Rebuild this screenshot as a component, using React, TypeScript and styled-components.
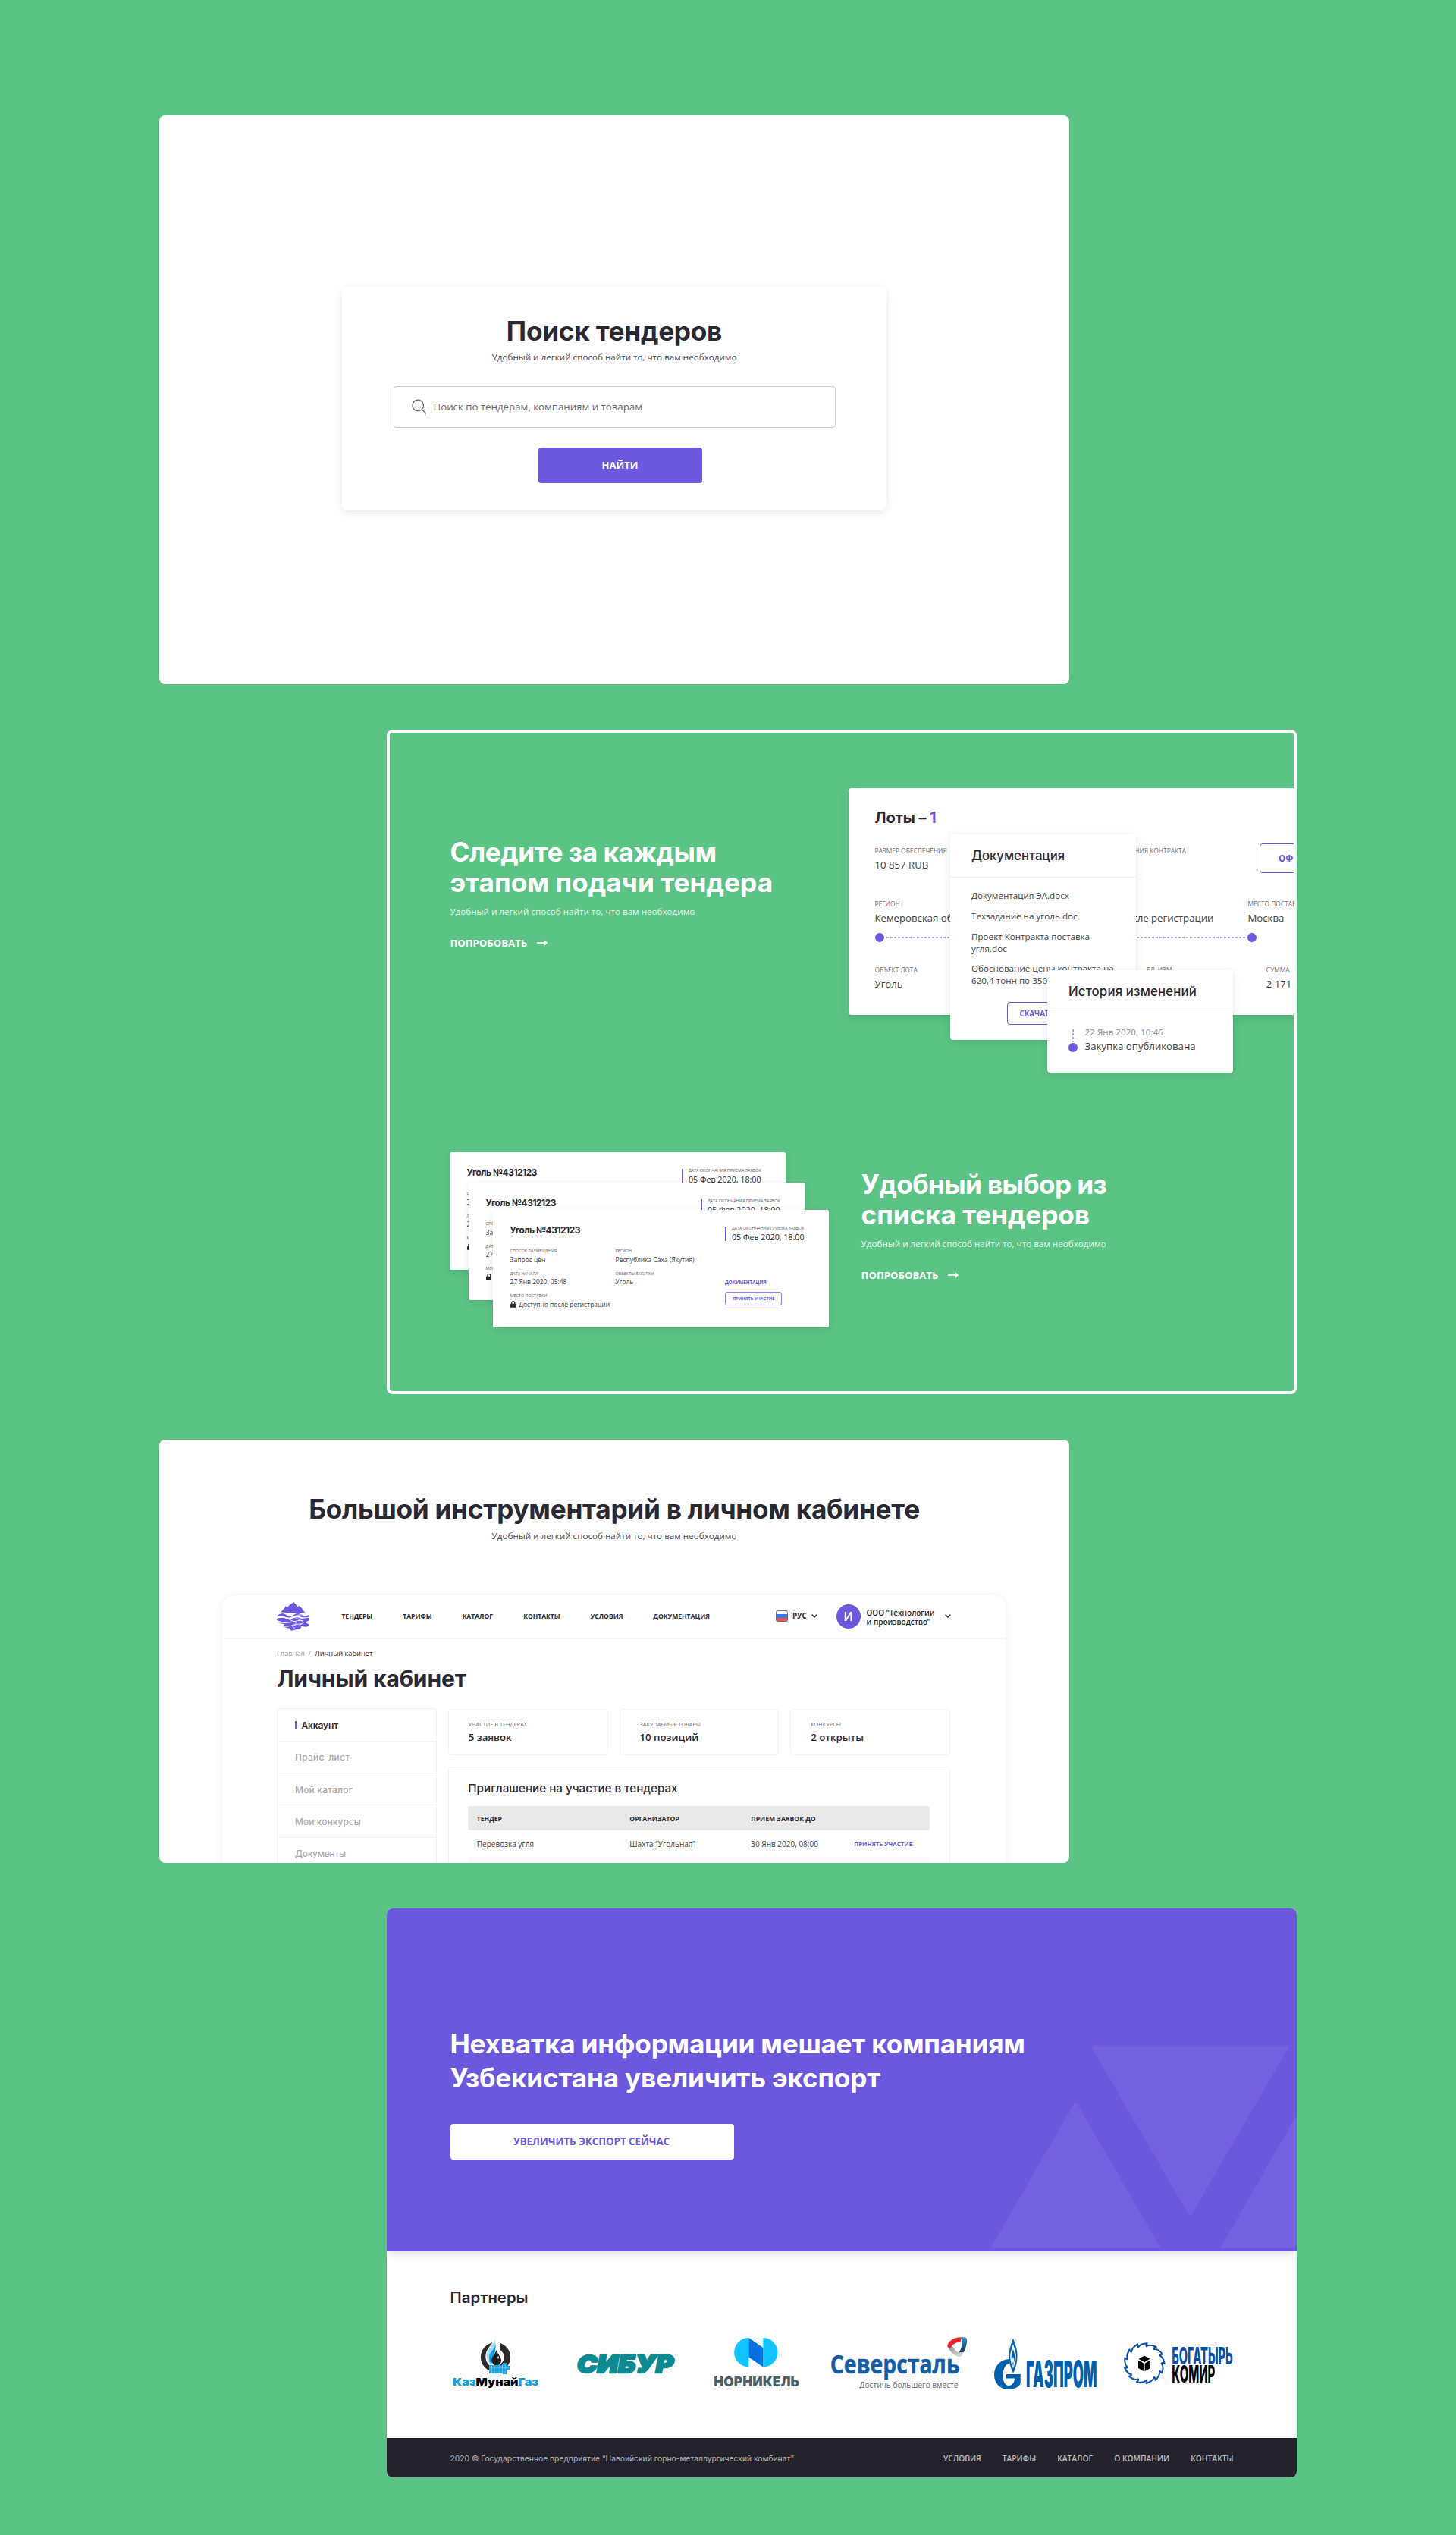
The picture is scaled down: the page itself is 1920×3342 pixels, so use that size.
import React from "react";
import styled, { createGlobalStyle, css } from "styled-components";

const green = "#5bc385";
const violet = "#6c58dd";
const ink = "#2a2833";
const text = "#403e49";

const GlobalStyle = createGlobalStyle`
  * { box-sizing: border-box; }
  html, body { margin: 0; padding: 0; }
  body { background: ${green}; font-family: "Open Sans", "Noto Sans", sans-serif; color: ${ink}; }
`;

const display = css`font-family: Inter, "Open Sans", sans-serif;`;

const Page = styled.main`
  width: 1920px;
  height: 3342px;
  padding: 152px 210px 0;
  background: ${green};
  display: flex;
  flex-direction: column;
  gap: 60px;
  overflow: hidden;
`;

const Panel = styled.section<{ $h: number; $right?: boolean }>`
  width: 1200px;
  height: ${(p) => p.$h}px;
  flex: none;
  margin-left: ${(p) => (p.$right ? 300 : 0)}px;
  border-radius: 8px;
  background: #fff;
  overflow: hidden;
`;

const Heading = styled.h2<{ $ls?: number; $lh?: number; $light?: boolean }>`
  ${display}
  margin: 0;
  font-size: 35.2px;
  font-weight: 700;
  line-height: ${(p) => p.$lh ?? 42}px;
  letter-spacing: ${(p) => p.$ls ?? 0}px;
  color: ${(p) => (p.$light ? "#fff" : ink)};
  white-space: nowrap;
`;

const HeadingLine = styled.span<{ $ls: number }>`
  display: block;
  letter-spacing: ${(p) => p.$ls}px;
`;

const Lead = styled.p<{ $light?: boolean; $top: number }>`
  margin: ${(p) => p.$top}px 0 0;
  font-size: 11.65px;
  line-height: 16px;
  color: ${(p) => (p.$light ? "rgba(255,255,255,.88)" : "#4c4a55")};
  white-space: nowrap;
`;

/* ---------- search ---------- */

const SearchPanel = styled(Panel)`
  display: flex;
  flex-direction: column;
  align-items: center;
  padding-top: 226px;
`;

const SearchCard = styled.form`
  width: 718px;
  height: 295px;
  padding-top: 36.5px;
  border-radius: 8px;
  background: #fff;
  box-shadow: 0 3px 12px rgba(0, 0, 0, 0.09);
  display: flex;
  flex-direction: column;
  align-items: center;
`;

const SearchField = styled.label`
  width: 583px;
  height: 55px;
  margin-top: 30.5px;
  padding: 0 0 1px 23.5px;
  border: 1px solid #c9c9cc;
  border-radius: 4px;
  display: flex;
  align-items: center;
  gap: 8.5px;
  font-size: 13.27px;
  color: #6b6a72;
`;

const SearchButton = styled.button`
  width: 216px;
  height: 47px;
  margin: 26px 0 0 16px;
  padding: 0 1px 1px 0;
  border: 0;
  border-radius: 4px;
  background: ${violet};
  color: #fff;
  font: 700 13px "Open Sans", sans-serif;
`;

/* ---------- features ---------- */

const FeaturePanel = styled(Panel)`
  border: 4px solid #fff;
  background: ${green};
`;

const FeatureRow = styled.div<{ $cols: string }>`
  height: 437.5px;
  display: grid;
  grid-template-columns: ${(p) => p.$cols};
`;

const FeatureText = styled.div`
  padding: 137px 0 0 79.4px;
`;

const FeatureTextPlain = styled.div`
  padding-top: 137px;
`;

const TryLink = styled.a`
  margin-top: 24px;
  display: flex;
  align-items: center;
  gap: 13px;
  color: #fff;
  font-size: 13.2px;
  font-weight: 700;
  line-height: 18px;
`;

const LotsScene = styled.div`
  position: relative;
  margin-top: 73px;
  height: 375px;
`;

const LotsCard = styled.article`
  width: 700px;
  height: 299px;
  padding: 27px 0 0 35px;
  border-radius: 4px;
  background: #fff;
  box-shadow: 0 4px 14px rgba(0, 0, 0, 0.1);
`;

const LotsTitle = styled.h3`
  ${display}
  margin: 0;
  font-size: 20px;
  font-weight: 700;
  line-height: 24px;
  letter-spacing: -0.1px;
  span { color: ${violet}; }
`;

const FieldRow = styled.div<{ $cols: string; $top: number }>`
  display: grid;
  grid-template-columns: ${(p) => p.$cols};
  margin-top: ${(p) => p.$top}px;
  white-space: nowrap;
`;

const Field = styled.div<{ $end?: number }>`
  display: flex;
  flex-direction: column;
  gap: 2.8px;
  ${(p) => p.$end && css`width: ${p.$end}px; align-items: flex-end;`}
`;

const FieldLabel = styled.span`
  font-size: 8.4px;
  line-height: 12px;
  color: #74737b;
`;

const FieldValue = styled.span`
  min-height: 18px;
  font-size: 13.2px;
  line-height: 18px;
  color: ${text};
`;

const OutlineButton = styled.button<{ $w: number; $h: number; $size: number; $pad: number }>`
  width: ${(p) => p.$w}px;
  height: ${(p) => p.$h}px;
  padding: 0 0 0 ${(p) => p.$pad}px;
  border: 1.6px solid ${violet};
  border-radius: 4px;
  background: #fff;
  color: ${violet};
  font: 700 ${(p) => p.$size}px "Open Sans", sans-serif;
  text-align: left;
  white-space: nowrap;
`;

const OfferSlot = styled.div`
  height: 33px;
  margin: -4px 0 0 15px;
`;

const Track = styled.div`
  width: 503px;
  margin-top: 10.8px;
  display: flex;
  align-items: center;
  gap: 3px;
`;

const Dot = styled.i`
  width: 12px;
  height: 12px;
  flex: none;
  border-radius: 50%;
  background: ${violet};
`;

const Dashes = styled.i`
  flex: 1;
  height: 2px;
  background: repeating-linear-gradient(90deg, #aea2ee 0 3px, #fff 3px 5px);
`;

const FloatCard = styled.article<{ $x: number; $y: number; $h: number }>`
  position: absolute;
  left: ${(p) => p.$x}px;
  top: ${(p) => p.$y}px;
  width: 245px;
  height: ${(p) => p.$h}px;
  border-radius: 4px;
  background: #fff;
  box-shadow: 0 2px 11px rgba(0, 0, 0, 0.1);
`;

const FloatTitle = styled.h3<{ $ls: number }>`
  ${display}
  margin: 0;
  padding: 18px 0 0 28px;
  height: 57px;
  border-bottom: 1px solid #ededef;
  font-size: 16.8px;
  font-weight: 550;
  line-height: 21px;
  letter-spacing: ${(p) => p.$ls}px;
`;

const DocList = styled.ul`
  list-style: none;
  margin: 0;
  padding: 16.5px 20px 0 28px;
  display: flex;
  flex-direction: column;
  gap: 10.7px;
  font-size: 11.65px;
  line-height: 16px;
  color: ${text};
  white-space: pre;
`;

const DownloadSlot = styled.div`
  margin: 19.5px 0 0 75px;
`;

const HistoryEntry = styled.div`
  display: flex;
  gap: 9.6px;
  padding: 17.8px 0 0 28px;
`;

const Marker = styled.div`
  display: flex;
  flex-direction: column;
  align-items: center;
  gap: 1px;
  padding-top: 3.5px;
`;

const VerticalDashes = styled.i`
  width: 2px;
  height: 17px;
  background: repeating-linear-gradient(180deg, #aea2ee 0 3px, #fff 3px 5px);
`;

const HistoryBody = styled.div`
  display: flex;
  flex-direction: column;
  gap: 1px;
`;

const HistoryDate = styled.time`
  font-size: 11.65px;
  line-height: 16px;
  color: #8d8c93;
`;

/* ---------- tender stack ---------- */

const StackScene = styled.div`
  position: relative;
  margin: 115.8px 0 0 79.3px;
`;

const TenderBox = styled.article<{ $x: number; $y: number }>`
  position: absolute;
  left: ${(p) => p.$x}px;
  top: ${(p) => p.$y}px;
  width: 443px;
  height: 155px;
  padding: 19.4px 0 0 22.3px;
  border-radius: 2.5px;
  background: #fff;
  box-shadow: 0 3px 12px rgba(0, 0, 0, 0.09);
  white-space: nowrap;
`;

const TenderHead = styled.header`
  display: grid;
  grid-template-columns: 283px auto;
  height: 24px;
`;

const TenderTitle = styled.h4`
  ${display}
  margin: 0;
  font-size: 11.8px;
  font-weight: 700;
  line-height: 14px;
  letter-spacing: -0.41px;
`;

const Deadline = styled.div`
  display: flex;
  gap: 7.3px;
`;

const DeadlineBar = styled.i`
  width: 2px;
  height: 19.5px;
  margin-top: 2px;
  background: ${violet};
`;

const TinyField = styled.div`
  display: flex;
  flex-direction: column;
  gap: 1.8px;
`;

const TinyLabel = styled.span`
  font-size: 5.43px;
  line-height: 8px;
  color: #5e5d66;
`;

const TinyValue = styled.span`
  display: flex;
  align-items: center;
  gap: 4px;
  font-size: 8.45px;
  line-height: 12px;
  color: ${text};
`;

const DeadlineValue = styled.span`
  font-size: 10.69px;
  font-weight: 500;
  line-height: 14px;
  color: ${ink};
`;

const TenderBody = styled.div`
  margin-top: 6.4px;
  display: grid;
  grid-template-columns: 139px 144.4px auto;
`;

const TinyColumn = styled.div`
  display: flex;
  flex-direction: column;
  gap: 7.7px;
`;

const TenderActions = styled.div`
  padding-top: 42px;
  display: flex;
  flex-direction: column;
  gap: 7.7px;
`;

const TinyLink = styled.a`
  font-size: 6.3px;
  font-weight: 700;
  line-height: 8px;
  color: ${violet};
`;

const TinyButton = styled.button`
  width: 75.5px;
  height: 18.2px;
  padding: 0;
  border: 1px solid #8f80e8;
  border-radius: 3px;
  background: #fff;
  color: ${violet};
  font: 700 5.7px "Open Sans", sans-serif;
`;

/* ---------- cabinet ---------- */

const CabinetPanel = styled(Panel)`
  display: flex;
  flex-direction: column;
  align-items: center;
  padding-top: 70px;
`;

const Browser = styled.div`
  width: 1033px;
  height: 600px;
  flex: none;
  margin-top: 69.6px;
  margin-right: 1px;
  border-radius: 17px 17px 0 0;
  background: #fff;
  box-shadow: 0 1px 12px rgba(0, 0, 0, 0.07);
`;

const TopBar = styled.header`
  height: 58px;
  padding: 0 72.5px 0 72px;
  border-bottom: 2px solid #f6f6f7;
  display: flex;
  align-items: center;
`;

const Nav = styled.nav`
  margin-left: 42px;
  display: flex;
  gap: 40.1px;
  font-size: 8.55px;
  font-weight: 700;
  line-height: 12px;
`;

const Language = styled.div`
  margin-left: auto;
  display: flex;
  align-items: center;
  gap: 5.8px;
  font-size: 9.7px;
  font-weight: 700;
`;

const Account = styled.div`
  margin-left: 25px;
  display: flex;
  align-items: center;
  gap: 8px;
  font-size: 10px;
  font-weight: 600;
  line-height: 12.4px;
`;

const Avatar = styled.span`
  width: 32px;
  height: 32px;
  border-radius: 50%;
  background: ${violet};
  color: #fff;
  display: grid;
  place-items: center;
  ${display}
  font-size: 16px;
  font-weight: 500;
`;

const CompanyName = styled.span`
  width: 95px;
  padding-top: 3px;
  white-space: pre;
`;

const Content = styled.div`
  padding: 11.8px 72px 0;
`;

const Crumbs = styled.div`
  display: flex;
  gap: 5px;
  font-size: 9.29px;
  line-height: 14px;
  color: #a09fa5;
  b { font-weight: 400; color: ${ink}; }
`;

const CabinetTitle = styled.h1`
  ${display}
  margin: 8px 0 0;
  font-size: 30px;
  font-weight: 700;
  line-height: 36px;
  letter-spacing: -0.12px;
`;

const Columns = styled.div`
  margin-top: 21.6px;
  display: grid;
  grid-template-columns: 211px 662px;
  gap: 15px;
`;

const Sidebar = styled.ul`
  list-style: none;
  margin: 0;
  padding: 0;
  border: 1px solid #f3f3f4;
  border-radius: 4px;
`;

const SideItem = styled.li<{ $active?: boolean; $ls: number }>`
  ${display}
  height: 42.3px;
  padding: 1px 0 0 23px;
  border-bottom: 1px solid #f3f3f4;
  display: flex;
  align-items: center;
  gap: 6.5px;
  font-size: 12px;
  font-weight: ${(p) => (p.$active ? 600 : 500)};
  letter-spacing: ${(p) => p.$ls}px;
  color: ${(p) => (p.$active ? ink : "#aaa9ae")};
  ${(p) => p.$active && css`
    &::before { content: ""; width: 2px; height: 11px; background: ${violet}; }
  `}
`;

const Main = styled.div`
  padding-top: 1px;
  display: flex;
  flex-direction: column;
  gap: 15px;
`;

const Stats = styled.div`
  display: grid;
  grid-template-columns: repeat(3, 1fr);
  gap: 15px;
`;

const Stat = styled.div`
  height: 60.7px;
  padding: 14px 0 0 25.8px;
  border: 1px solid #f3f3f4;
  border-radius: 4px;
  display: flex;
  flex-direction: column;
  gap: 2.6px;
`;

const StatLabel = styled.span`
  font-size: 7.35px;
  line-height: 10px;
  color: #74737b;
`;

const StatValue = styled.span`
  font-size: 13.27px;
  font-weight: 550;
  line-height: 18px;
`;

const TableCard = styled.section`
  height: 260px;
  padding: 17.6px 26.5px 0 25.3px;
  border: 1px solid #f3f3f4;
  border-radius: 4px;
`;

const TableTitle = styled.h3`
  ${display}
  margin: 0 0 13.5px;
  font-size: 15.2px;
  font-weight: 550;
  line-height: 20px;
`;

const TableRow = styled.div<{ $head?: boolean; $fill?: string }>`
  height: ${(p) => (p.$head ? 32.3 : 34.3)}px;
  padding: 1px 0 0 11.5px;
  border-radius: 3px;
  background: ${(p) => p.$fill ?? "transparent"};
  display: grid;
  grid-template-columns: 201.5px 160px 136px auto;
  align-items: center;
  font-size: ${(p) => (p.$head ? 8.6 : 10)}px;
  font-weight: ${(p) => (p.$head ? 700 : 400)};
  color: ${(p) => (p.$head ? ink : text)};
`;

const JoinLink = styled.a`
  color: ${violet};
  font-size: 7.85px;
  font-weight: 700;
`;

/* ---------- call to action ---------- */

const Hero = styled.div`
  position: relative;
  height: 452px;
  padding: 156.5px 0 0 83.5px;
  background: ${violet};
  box-shadow: 0 2px 14px rgba(0, 0, 0, 0.14);
`;

const Triangles = styled.svg`
  position: absolute;
  right: 0;
  bottom: 0;
`;

const HeroButton = styled.button`
  width: 374px;
  height: 47px;
  margin-top: 37.5px;
  padding: 0 1px 0 0;
  border: 0;
  border-radius: 4px;
  background: #fff;
  color: ${violet};
  font: 700 13.27px "Open Sans", sans-serif;
`;

const Partners = styled.div`
  height: 246px;
  padding: 48.4px 0 0 83.6px;
`;

const PartnersTitle = styled.h3`
  ${display}
  margin: 0 0 36.6px;
  font-size: 20.35px;
  font-weight: 600;
  line-height: 26px;
`;

const LogoRow = styled.div`
  display: grid;
  grid-template-columns: 164px 181px 154px 215px 172px 147px;
  svg { display: block; }
`;

const Footer = styled.footer`
  height: 52px;
  padding: 2px 83.5px 0;
  background: #24232d;
  display: flex;
  align-items: center;
  justify-content: space-between;
`;

const Copyright = styled.span`
  ${display}
  font-size: 10.3px;
  color: #b4b3b9;
`;

const FooterNav = styled.nav`
  display: flex;
  gap: 28px;
  font-size: 10.25px;
  font-weight: 600;
  color: #bdbcc1;
`;

/* ---------- drawings ---------- */

const ArrowIcon = () => (
  <svg width="14" height="10" viewBox="0 0 14 10">
    <path d="M0 5h11" stroke="#fff" strokeWidth="1.7" />
    <path d="M10 1.2 14 5l-4 3.8z" fill="#fff" />
  </svg>
);

const SearchIcon = () => (
  <svg width="20" height="20" viewBox="0 0 20 20" fill="none" stroke="#65646c" strokeWidth="1.2">
    <circle cx="8.2" cy="8.4" r="7.3" />
    <path d="M13.2 13.8 19 19.3" />
  </svg>
);

const LockIcon = () => (
  <svg width="7.6" height="9" viewBox="0 0 15 17">
    <path d="M3.5 8V5a4 4 0 0 1 8 0v3" fill="none" stroke={ink} strokeWidth="2.4" />
    <rect y="7" width="15" height="10" rx="1.8" fill={ink} />
  </svg>
);

const Chevron = () => (
  <svg width="8" height="5" viewBox="0 0 8 5" fill="none" stroke={ink} strokeWidth="1.5">
    <path d="M.6.6 4 4 7.4.6" />
  </svg>
);

const Flag = () => (
  <svg width="16" height="15" viewBox="0 0 16 15">
    <rect x=".5" y=".5" width="15" height="14" rx="2" fill="#fff" />
    <path d="M.5 5h15v5H.5z" fill="#2f7df0" />
    <path d="M.5 10h15v2.5a2 2 0 0 1-2 2h-11a2 2 0 0 1-2-2z" fill="#f24f4f" />
    <rect x=".5" y=".5" width="15" height="14" rx="2" fill="none" stroke="#55535e" strokeWidth=".8" />
  </svg>
);

const MountainLogo = () => (
  <svg width="43.4" height="38" viewBox="0 0 130 114">
    <g fill={violet}>
      <path d="M67 0 77 11l6 8 6-4 10 9 4 8 14 13H13l11-14 8-9 2-6 8 4 8-8 8-5z" />
      <path d="M2 52c12-8 24-8 34-2 12 8 20 8 32 0 10-7 20-7 30 0 10 6 20 6 30 0l2 8c-18 4-30 4-40-2-8-5-14-5-24 0-14 7-24 7-36 1-9-4-18-3-28 1z" />
      <path d="M2 64 28 62 50 70 76 60 100 66 128 62 130 72 112 80 130 90 118 98 98 96 92 106 56 113 50 104 24 98 30 88 8 84 18 78 0 72z" />
    </g>
    <g fill="none" stroke="#fff" strokeWidth="2.6">
      <path d="M0 54c22-18 34-12 50-2 18 12 32 8 48-2 14-8 24-2 32 2" />
      <path d="M6 44c22-6 34 4 46 10 18 8 34-2 44-8 10-5 20-4 30-1" />
      <path d="M28 61c16 4 24 11 40 16 12 4 10 10-2 13-10 4-4 9 6 13" />
      <path d="M68 61c12 3 20 10 32 14 12 4 6 9-4 12-10 3-4 8 6 10" />
      <path d="M8 84c20-2 36 0 52-6" />
      <path d="M24 99c14-4 28-2 42-8" />
      <path d="M62 79c16-4 24-8 40-5" />
      <path d="M68 92c12-4 20-6 30-5" />
    </g>
  </svg>
);

const KazMunayGas = () => (
  <svg width="118" height="76" viewBox="0 0 118 76">
    <circle cx="59.5" cy="29.5" r="15.4" fill="none" stroke="#2b2b2b" strokeWidth="8.4" />
    <path d="M60 2C58 12 45 17 46.5 31c1 6 5 10 9 12l8-1 2-30z" fill="#fff" />
    <path d="M58 4.5C59 14 47 18 47.5 28c.5 5 2.5 9 6 12C50 24 63 20 58 4.5z" fill="#a5dcf7" />
    <path d="M59.5 11C59 20 51 22 51 30c0 4 1 7 3.5 10 0-8 6-13 5-29z" fill="#0ba0e6" />
    <path d="M60.5 20c2 6 6.5 9 6.5 14a6.4 6.4 0 0 1-12.8 0c0-5 5-8 6.3-14z" fill="#1e1e1e" />
    <path d="M61.500 28.500h2.500v3h-2.500z" fill="#fff" opacity=".75" />
    <path d="M51 40h18v-3h5v4h4v6h-4v5h-5v-1H51z" fill="#10a5ea" />
    <path d="M51 43h26M51 46.5h26M54.5 40v11M58 40v11M61.5 40v11M65 40v11M68.5 38v13M72 38v13" stroke="#a5dcf7" strokeWidth=".6" />
    <text x="3" y="66.7" fontFamily="Inter" fontWeight="900" fontSize="13.8" textLength="113" lengthAdjust="spacingAndGlyphs">
      <tspan fill="#0ba0e6">Каз</tspan><tspan fill="#000">Мунай</tspan><tspan fill="#0ba0e6">Газ</tspan>
    </text>
  </svg>
);

const Sibur = () => (
  <svg width="134" height="76" viewBox="0 0 134 76">
    <text x="3" y="49.8" fontFamily="Inter" fontWeight="900" fontStyle="italic" fontSize="31.5" fill="#0b8a92" stroke="#0b8a92" strokeWidth="2.4" strokeLinejoin="round" textLength="127" lengthAdjust="spacingAndGlyphs">СИБУР</text>
  </svg>
);

const Nornickel = () => (
  <svg width="118" height="76" viewBox="0 0 118 76">
    <path d="M48.3 4v38.4a19.2 19.2 0 0 1 0-38.4z" fill="#10c3ff" />
    <path d="M67.3 4v38.4a19.2 19.2 0 0 0 0-38.4z" fill="#10c3ff" />
    <path d="M48.3 4 67.3 17v25.4l-19-13z" fill="#0670de" />
    <text x="2.3" y="68.3" fontFamily="Inter" fontWeight="900" fontSize="16.8" fill="#4b5f66" textLength="113" lengthAdjust="spacingAndGlyphs">НОРНИКЕЛЬ</text>
  </svg>
);

const Severstal = () => (
  <svg width="185" height="76" viewBox="0 0 185 76">
    <defs>
      <linearGradient id="steel" x1="0" y1="0" x2="1" y2="1">
        <stop offset="0" stopColor="#8f9296" /><stop offset="1" stopColor="#e6e7e8" />
      </linearGradient>
      <linearGradient id="azure" x1="0" y1="0" x2="0" y2="1">
        <stop offset="0" stopColor="#2f8fd0" /><stop offset="1" stopColor="#10365f" />
      </linearGradient>
    </defs>
    <path d="M156.5 15 160 14l4.500 2.5c2 4 4.500 6 7.500 7h5.500c-1 3-3 5.600-5 5.800-7-.8-14-8-16-14.300z" fill="url(#steel)" />
    <path d="M174 3.400c3.500-.4 6.800.2 7.800 1.600.8 5-.8 13-4.300 18l-6 .5c3-4 4.600-10 3.800-14.500z" fill="url(#azure)" />
    <path d="M156.5 15.500c-.8-6 8-12.400 18-12.300l-.8 6c-5 .2-10 3-11.700 5.800l-3 3z" fill="#e2232a" />
    <text x="1.8" y="51.3" fontFamily="Open Sans" fontWeight="700" fontSize="33.5" fill="#145da6" stroke="#145da6" strokeWidth=".5" textLength="170.5" lengthAdjust="spacingAndGlyphs">Северсталь</text>
    <text x="40.5" y="69.7" fontFamily="Open Sans" fontSize="11.3" fill="#6b6c70" textLength="130" lengthAdjust="spacingAndGlyphs">Достичь большего вместе</text>
  </svg>
);

const Gazprom = () => (
  <svg width="141" height="76" viewBox="0 0 141 76">
    <path d="M23.5 32C11 32.5 3 41.5 3 52.5 3 64 11 72 21 72c8.500 0 15.500-3.500 16.700-8V52H19v5.500h11c-.2 5.500-3.300 9.500-7.500 9.500-5.500 0-8-6-8-14 0-7 3-14.500 9-15.500z" fill="#0060ab" />
    <path d="M28 4.500c-2 7-5.500 13-5.500 23S25 43 27.200 49.500h1.600C31 43 33.500 38 33.500 27.500S30 11.500 28 4.500z" fill="#0060ab" />
    <path d="M28 12c-1.200 5-3.800 10-3.800 16.500 0 6 1.800 10.500 3.800 16 2-5.500 3.800-10 3.800-16C31.800 22 29.200 17 28 12z" fill="#fff" />
    <path d="M28 19c-.8 3.500-2.400 6.500-2.400 10.500L28 42l2.400-12.500c0-4-1.600-7-2.400-10.500z" fill="#0060ab" />
    <path d="M28 29c-.8 2-1 3-1 5l1 6 1-6c0-2-.2-3-1-5z" fill="#fff" />
    <text x="45" y="68.8" fontFamily="Inter" fontWeight="900" fontSize="48" fill="#0060ab" textLength="93.5" lengthAdjust="spacingAndGlyphs">ГАЗПРОМ</text>
  </svg>
);

const teeth = 13;
const gearPath = Array.from({ length: teeth }, (_, i) => {
  const step = (Math.PI * 2) / teeth;
  const at = (r: number, a: number) => `${(29 + r * Math.cos(a)).toFixed(2)} ${(37.5 + r * Math.sin(a)).toFixed(2)}`;
  const a = i * step;
  return `${i ? "L" : "M"}${at(22.5, a)}Q${at(26.5, a + step * 0.35)} ${at(26.6, a + step * 1.05)}Q${at(24, a + step * 0.9)} ${at(22.5, a + step)}`;
}).join("");

const Bogatyr = () => (
  <svg width="147" height="76" viewBox="0 0 147 76">
    <path d={gearPath + "Z"} fill="none" stroke="#0a50a6" strokeWidth="2" strokeLinejoin="round" />
    <path d="m29 27.5 7.500 4.300L29 36.200l-7.500-4.400z" />
    <path d="m21 33.500 7.400 4.300v10.400L21 44z" />
    <path d="m37 33.500-7.400 4.300v10.400L37 44z" />
    <text x="65.3" y="38.5" fontFamily="Inter" fontWeight="800" fontSize="31.2" fill="#0a50a6" textLength="80.5" lengthAdjust="spacingAndGlyphs">БОГАТЫРЬ</text>
    <text x="65.3" y="62.8" fontFamily="Inter" fontWeight="800" fontSize="31.2" fill="#000" textLength="57" lengthAdjust="spacingAndGlyphs">КОМИР</text>
  </svg>
);

/* ---------- parts ---------- */

const subtitle = "Удобный и легкий способ найти то, что вам необходимо";

const Pitch = ({ lines }: { lines: [string, number][] }) => (
  <>
    <Heading $light $lh={40}>
      {lines.map(([line, ls]) => <HeadingLine key={line} $ls={ls}>{line}</HeadingLine>)}
    </Heading>
    <Lead $light $top={11}>{subtitle}</Lead>
    <TryLink>ПОПРОБОВАТЬ <ArrowIcon /></TryLink>
  </>
);

const LotField = ({ label, value, end }: { label: string; value: string; end?: number }) => (
  <Field $end={end}>
    {label ? <FieldLabel>{label}</FieldLabel> : <FieldLabel>&nbsp;</FieldLabel>}
    <FieldValue>{value}</FieldValue>
  </Field>
);

const Tiny = ({ label, value, locked }: { label: string; value: string; locked?: boolean }) => (
  <TinyField>
    <TinyLabel>{label}</TinyLabel>
    <TinyValue>{locked && <LockIcon />}{value}</TinyValue>
  </TinyField>
);

const TenderCard = ({ x, y }: { x: number; y: number }) => (
  <TenderBox $x={x} $y={y}>
    <TenderHead>
      <TenderTitle>Уголь №4312123</TenderTitle>
      <Deadline>
        <DeadlineBar />
        <TinyField>
          <TinyLabel>ДАТА ОКОНЧАНИЯ ПРИЕМА ЗАЯВОК</TinyLabel>
          <DeadlineValue>05 Фев 2020, 18:00</DeadlineValue>
        </TinyField>
      </Deadline>
    </TenderHead>
    <TenderBody>
      <TinyColumn>
        <Tiny label="СПОСОБ РАЗМЕЩЕНИЯ" value="Запрос цен" />
        <Tiny label="ДАТА НАЧАЛА" value="27 Янв 2020, 05:48" />
        <Tiny label="МЕСТО ПОСТАВКИ" value="Доступно после регистрации" locked />
      </TinyColumn>
      <TinyColumn>
        <Tiny label="РЕГИОН" value="Республика Саха (Якутия)" />
        <Tiny label="ОБЪЕКТЫ ЗАКУПКИ" value="Уголь" />
      </TinyColumn>
      <TenderActions>
        <TinyLink>ДОКУМЕНТАЦИЯ</TinyLink>
        <TinyButton>ПРИНЯТЬ УЧАСТИЕ</TinyButton>
      </TenderActions>
    </TenderBody>
  </TenderBox>
);

export default function App() {
  return (
    <Page>
      <GlobalStyle />

      <SearchPanel $h={750}>
        <SearchCard>
          <Heading $ls={-0.25}>Поиск тендеров</Heading>
          <Lead $top={6}>{subtitle}</Lead>
          <SearchField><SearchIcon />Поиск по тендерам, компаниям и товарам</SearchField>
          <SearchButton type="button">НАЙТИ</SearchButton>
        </SearchCard>
      </SearchPanel>

      <FeaturePanel $h={876} $right>
        <FeatureRow $cols="604.5px 587.5px">
          <FeatureText>
            <Pitch lines={[["Следите за каждым", -0.45], ["этапом подачи тендера", 0.06]]} />
          </FeatureText>
          <LotsScene>
            <LotsCard>
              <LotsTitle>Лоты – <span>1</span></LotsTitle>
              <FieldRow $top={26} $cols="258px 234px auto">
                <LotField label="РАЗМЕР ОБЕСПЕЧЕНИЯ" value="10 857 RUB" />
                <LotField label="СРОК ИСПОЛНЕНИЯ КОНТРАКТА" value="" end={152.5} />
                <OfferSlot>
                  <OutlineButton $w={130} $h={39} $size={11.6} $pad={24.5}>ОФОРМИТЬ</OutlineButton>
                </OfferSlot>
              </FieldRow>
              <FieldRow $top={37.2} $cols="258px 234px auto">
                <LotField label="РЕГИОН" value="Кемеровская область" />
                <LotField label="" value="Доступно после регистрации" end={189} />
                <LotField label="МЕСТО ПОСТАВКИ" value="Москва" />
              </FieldRow>
              <Track><Dot /><Dashes /><Dot /></Track>
              <FieldRow $top={31.7} $cols="358.6px 157.6px auto">
                <LotField label="ОБЪЕКТ ЛОТА" value="Уголь" />
                <LotField label="ЕД. ИЗМ." value="" />
                <LotField label="СУММА" value="2 171" />
              </FieldRow>
            </LotsCard>
            <FloatCard $x={134.5} $y={60.7} $h={271.3}>
              <FloatTitle $ls={-0.05}>Документация</FloatTitle>
              <DocList>
                <li>Документация ЭА.docx</li>
                <li>Техзадание на уголь.doc</li>
                <li>{"Проект Контракта поставка\nугля.doc"}</li>
                <li>{"Обоснование цены контракта на\n620,4 тонн по 350"}</li>
              </DocList>
              <DownloadSlot>
                <OutlineButton $w={95} $h={30.5} $size={9.8} $pad={15.5}>СКАЧАТЬ</OutlineButton>
              </DownloadSlot>
            </FloatCard>
            <FloatCard $x={262.5} $y={239.7} $h={135}>
              <FloatTitle $ls={0.15}>История изменений</FloatTitle>
              <HistoryEntry>
                <Marker><VerticalDashes /><Dot /></Marker>
                <HistoryBody>
                  <HistoryDate>22 Янв 2020, 10:46</HistoryDate>
                  <FieldValue>Закупка опубликована</FieldValue>
                </HistoryBody>
              </HistoryEntry>
            </FloatCard>
          </LotsScene>
        </FeatureRow>
        <FeatureRow $cols="621.6px 570px">
          <StackScene>
            <TenderCard x={0} y={0} />
            <TenderCard x={25} y={40} />
            <TenderCard x={57} y={76} />
          </StackScene>
          <FeatureTextPlain>
            <Pitch lines={[["Удобный выбор из", -0.65], ["списка тендеров", -0.08]]} />
          </FeatureTextPlain>
        </FeatureRow>
      </FeaturePanel>

      <CabinetPanel $h={557.5}>
        <Heading $ls={-0.26}>Большой инструментарий в личном кабинете</Heading>
        <Lead $top={7.4}>{subtitle}</Lead>
        <Browser>
          <TopBar>
            <MountainLogo />
            <Nav>
              {["ТЕНДЕРЫ", "ТАРИФЫ", "КАТАЛОГ", "КОНТАКТЫ", "УСЛОВИЯ", "ДОКУМЕНТАЦИЯ"].map((n) => <span key={n}>{n}</span>)}
            </Nav>
            <Language><Flag />РУС<Chevron /></Language>
            <Account>
              <Avatar>И</Avatar>
              <CompanyName>{"ООО “Технологии\nи производство”"}</CompanyName>
              <Chevron />
            </Account>
          </TopBar>
          <Content>
            <Crumbs>Главная <span>/</span> <b>Личный кабинет</b></Crumbs>
            <CabinetTitle>Личный кабинет</CabinetTitle>
            <Columns>
              <Sidebar>
                <SideItem $active $ls={-0.13}>Аккаунт</SideItem>
                <SideItem $ls={0.23}>Прайс-лист</SideItem>
                <SideItem $ls={0.18}>Мой каталог</SideItem>
                <SideItem $ls={0.04}>Мои конкурсы</SideItem>
                <SideItem $ls={-0.3}>Документы</SideItem>
              </Sidebar>
              <Main>
                <Stats>
                  <Stat><StatLabel>УЧАСТИЕ В ТЕНДЕРАХ</StatLabel><StatValue>5 заявок</StatValue></Stat>
                  <Stat><StatLabel>ЗАКУПАЕМЫЕ ТОВАРЫ</StatLabel><StatValue>10 позиций</StatValue></Stat>
                  <Stat><StatLabel>КОНКУРСЫ</StatLabel><StatValue>2 открыты</StatValue></Stat>
                </Stats>
                <TableCard>
                  <TableTitle>Приглашение на участие в тендерах</TableTitle>
                  <TableRow $head $fill="#e9e9e9">
                    <span>ТЕНДЕР</span><span>ОРГАНИЗАТОР</span><span>ПРИЕМ ЗАЯВОК ДО</span>
                  </TableRow>
                  <TableRow>
                    <span>Перевозка угля</span><span>Шахта “Угольная”</span><span>30 Янв 2020, 08:00</span>
                    <JoinLink>ПРИНЯТЬ УЧАСТИЕ</JoinLink>
                  </TableRow>
                  <TableRow $fill="#f9f9f9" />
                </TableCard>
              </Main>
            </Columns>
          </Content>
        </Browser>
      </CabinetPanel>

      <Panel $h={750} $right>
        <Hero>
          <Triangles width="404" height="273" viewBox="0 0 404 273">
            <path d="M137.2 4.500H389.500L263.300 222z" fill="#7462e0" stroke="#7462e0" strokeWidth="6" strokeLinejoin="round" />
            <path d="M.5 268.5 109.5 79.5a3.2 3.2 0 0 1 5.6 0L224.5 268.500z" fill="#7462e0" />
            <path d="M303.5 268.5 404 93v170a6 6 0 0 1-6 5.500z" fill="#7462e0" />
          </Triangles>
          <Heading $light $lh={45}>
            <HeadingLine $ls={-0.24}>Нехватка информации мешает компаниям</HeadingLine>
            <HeadingLine $ls={-0.2}>Узбекистана увеличить экспорт</HeadingLine>
          </Heading>
          <HeroButton>УВЕЛИЧИТЬ ЭКСПОРТ СЕЙЧАС</HeroButton>
        </Hero>
        <Partners>
          <PartnersTitle>Партнеры</PartnersTitle>
          <LogoRow>
            <KazMunayGas /><Sibur /><Nornickel /><Severstal /><Gazprom /><Bogatyr />
          </LogoRow>
        </Partners>
        <Footer>
          <Copyright>2020 © Государственное предприятие “Навоийский горно-металлургический комбинат”</Copyright>
          <FooterNav>
            {["УСЛОВИЯ", "ТАРИФЫ", "КАТАЛОГ", "О КОМПАНИИ", "КОНТАКТЫ"].map((n) => <span key={n}>{n}</span>)}
          </FooterNav>
        </Footer>
      </Panel>
    </Page>
  );
}
